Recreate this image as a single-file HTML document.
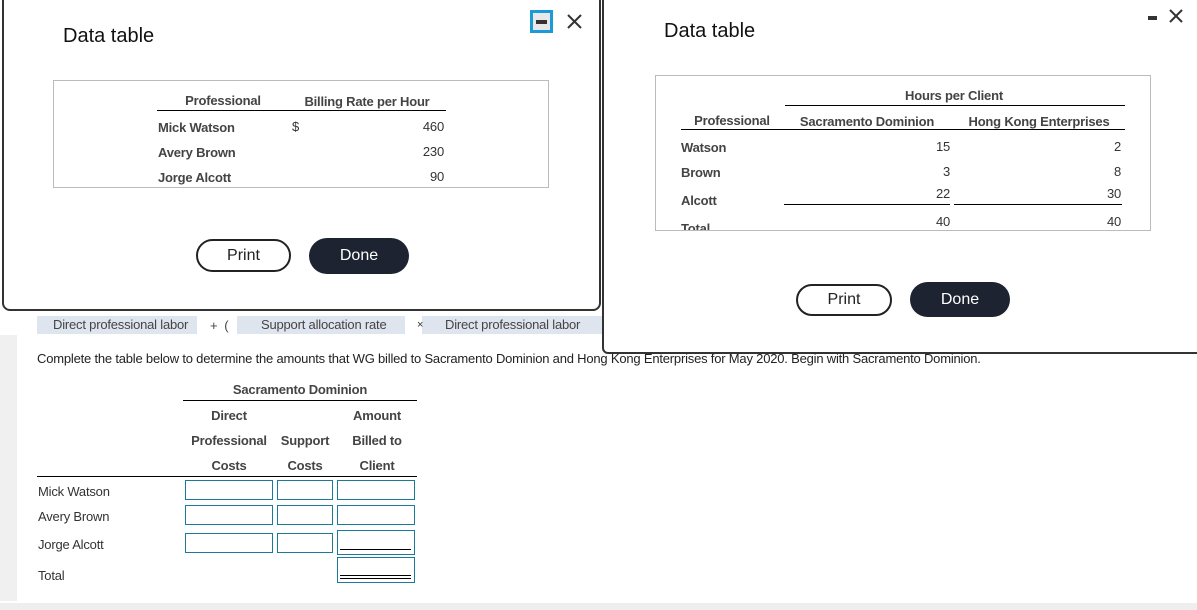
<!DOCTYPE html>
<html><head><meta charset="utf-8"><style>
*{margin:0;padding:0;box-sizing:border-box}
body{width:1197px;height:610px;position:relative;overflow:hidden;background:#fff;font-family:"Liberation Sans",Arial,sans-serif;color:#333}
.a{position:absolute;white-space:nowrap}
.c{transform:translateX(-50%)}
.r{transform:translateX(-100%)}
.t{font-size:13px;letter-spacing:-0.2px}
.b{font-weight:bold;color:#444}
.ln{position:absolute;height:1px;background:#000}
.inp{position:absolute;border:1.5px solid #1b7a99;background:#fff}
.btnP{position:absolute;border:2px solid #222;border-radius:17px;font-size:16px;text-align:center;color:#222}
.btnD{position:absolute;background:#1d2330;border-radius:18px;color:#fff;font-size:16px;text-align:center}
</style></head><body>
<div class="a" style="left:0;top:335px;width:17px;height:266px;background:#f0f0f0"></div>
<div class="a" style="left:0;top:603px;width:1197px;height:7px;background:#eeeeee"></div>

<div class="a" style="left:37px;top:316px;width:160px;height:18px;background:#dfe5ef"></div>
<div class="a" style="left:237px;top:316px;width:168px;height:18px;background:#dfe5ef"></div>
<div class="a" style="left:422px;top:316px;width:180px;height:18px;background:#dfe5ef"></div>
<div class="a t" style="left:53px;top:317px;color:#444">Direct professional labor</div>
<div class="a t" style="left:210px;top:318px;color:#444">+&nbsp; (</div>
<div class="a t" style="left:261px;top:317px;color:#444">Support allocation rate</div>
<div class="a" style="left:417px;top:319px;font-size:11px">×</div>
<div class="a t" style="left:445px;top:317px;color:#444">Direct professional labor</div>

<div class="a t" style="left:37px;top:351px;color:#222">Complete the table below to determine the amounts that WG billed to Sacramento Dominion and Hong Kong Enterprises for May 2020. Begin with Sacramento Dominion.</div>

<div class="a t b c" style="left:300px;top:382px">Sacramento Dominion</div>
<div class="ln" style="left:183px;top:400px;width:234px"></div>
<div class="a t b c" style="left:229px;top:408px">Direct</div>
<div class="a t b c" style="left:377px;top:408px">Amount</div>
<div class="a t b c" style="left:229px;top:433px">Professional</div>
<div class="a t b c" style="left:305px;top:433px">Support</div>
<div class="a t b c" style="left:377px;top:433px">Billed to</div>
<div class="a t b c" style="left:229px;top:458px">Costs</div>
<div class="a t b c" style="left:305px;top:458px">Costs</div>
<div class="a t b c" style="left:377px;top:458px">Client</div>
<div class="ln" style="left:37px;top:476px;width:380px"></div>
<div class="a t" style="left:38px;top:484px">Mick Watson</div>
<div class="a t" style="left:38px;top:509px">Avery Brown</div>
<div class="a t" style="left:38px;top:537px">Jorge Alcott</div>
<div class="a t" style="left:38px;top:568px">Total</div>
<div class="inp" style="left:185px;top:480px;width:88px;height:20px"></div>
<div class="inp" style="left:277px;top:480px;width:56px;height:20px"></div>
<div class="inp" style="left:337px;top:480px;width:78px;height:20px"></div>
<div class="inp" style="left:185px;top:505px;width:88px;height:20px"></div>
<div class="inp" style="left:277px;top:505px;width:56px;height:20px"></div>
<div class="inp" style="left:337px;top:505px;width:78px;height:20px"></div>
<div class="inp" style="left:185px;top:533px;width:88px;height:20px"></div>
<div class="inp" style="left:277px;top:533px;width:56px;height:20px"></div>
<div class="inp" style="left:337px;top:530px;width:78px;height:25px"><div class="ln" style="left:2px;top:18px;width:71px"></div></div>
<div class="inp" style="left:337px;top:557px;width:78px;height:26px"><div class="ln" style="left:2px;top:17px;width:71px"></div><div class="ln" style="left:2px;top:20px;width:71px"></div></div>

<div class="a" style="left:2px;top:-10px;width:599px;height:321px;background:#fff;border:2px solid #333;border-radius:0 0 8px 8px"></div>
<div class="a" style="left:63px;top:25px;font-size:20px;color:#111">Data table</div>
<div class="a" style="left:530px;top:10px;width:23px;height:23px;border:3px solid #1a9ad6;background:#e8e8e8"><div class="a" style="left:3px;top:7px;width:11px;height:4px;background:#333"></div></div>
<svg class="a" style="left:566px;top:13px" width="17" height="17"><path d="M2 2L15 15M15 2L2 15" stroke="#333" stroke-width="2"/></svg>
<div class="a" style="left:53px;top:80px;width:496px;height:108px;border:1px solid #bbb"></div>
<div class="a t b c" style="left:223px;top:93px">Professional</div>
<div class="a t b c" style="left:367px;top:94px">Billing Rate per Hour</div>
<div class="ln" style="left:157px;top:110px;width:289px"></div>
<div class="a t b" style="left:158px;top:120px">Mick Watson</div>
<div class="a t b" style="left:158px;top:145px">Avery Brown</div>
<div class="a t b" style="left:158px;top:170px">Jorge Alcott</div>
<div class="a t" style="left:292px;top:119px">$</div>
<div class="a t r" style="left:444px;top:119px">460</div>
<div class="a t r" style="left:444px;top:144px">230</div>
<div class="a t r" style="left:444px;top:169px">90</div>
<div class="btnP" style="left:196px;top:239px;width:95px;height:33px;line-height:29px">Print</div>
<div class="btnD" style="left:309px;top:238px;width:100px;height:36px;line-height:36px">Done</div>

<div class="a" style="left:602px;top:-10px;width:600px;height:364px;background:#fff;border:2px solid #333;border-radius:0 0 0 6px"></div>
<div class="a" style="left:664px;top:20px;font-size:20px;color:#111">Data table</div>
<div class="a" style="left:1148px;top:16px;width:9px;height:4px;background:#333"></div>
<svg class="a" style="left:1168px;top:8px" width="16" height="16"><path d="M2 2L14 14M14 2L2 14" stroke="#333" stroke-width="2"/></svg>
<div class="a" style="left:655px;top:75px;width:496px;height:156px;border:1px solid #bbb;overflow:hidden">
<div class="a t b c" style="left:298px;top:12px">Hours per Client</div>
<div class="ln" style="left:129px;top:29px;width:340px"></div>
<div class="a t b c" style="left:76px;top:37px">Professional</div>
<div class="a t b c" style="left:211px;top:38px">Sacramento Dominion</div>
<div class="a t b c" style="left:383px;top:38px">Hong Kong Enterprises</div>
<div class="ln" style="left:25px;top:53px;width:444px"></div>
<div class="a t b" style="left:25px;top:64px">Watson</div>
<div class="a t b" style="left:25px;top:89px">Brown</div>
<div class="a t b" style="left:25px;top:117px">Alcott</div>
<div class="a t b" style="left:25px;top:145px">Total</div>
<div class="a t r" style="left:294px;top:63px">15</div>
<div class="a t r" style="left:465px;top:63px">2</div>
<div class="a t r" style="left:294px;top:88px">3</div>
<div class="a t r" style="left:465px;top:88px">8</div>
<div class="a t r" style="left:294px;top:110px">22</div>
<div class="a t r" style="left:465px;top:110px">30</div>
<div class="ln" style="left:128px;top:128px;width:166px"></div>
<div class="ln" style="left:298px;top:128px;width:168px"></div>
<div class="a t r" style="left:294px;top:138px">40</div>
<div class="a t r" style="left:465px;top:138px">40</div>
</div>
<div class="btnP" style="left:796px;top:284px;width:96px;height:32px;line-height:28px">Print</div>
<div class="btnD" style="left:910px;top:282px;width:100px;height:35px;line-height:35px">Done</div>
</body></html>
